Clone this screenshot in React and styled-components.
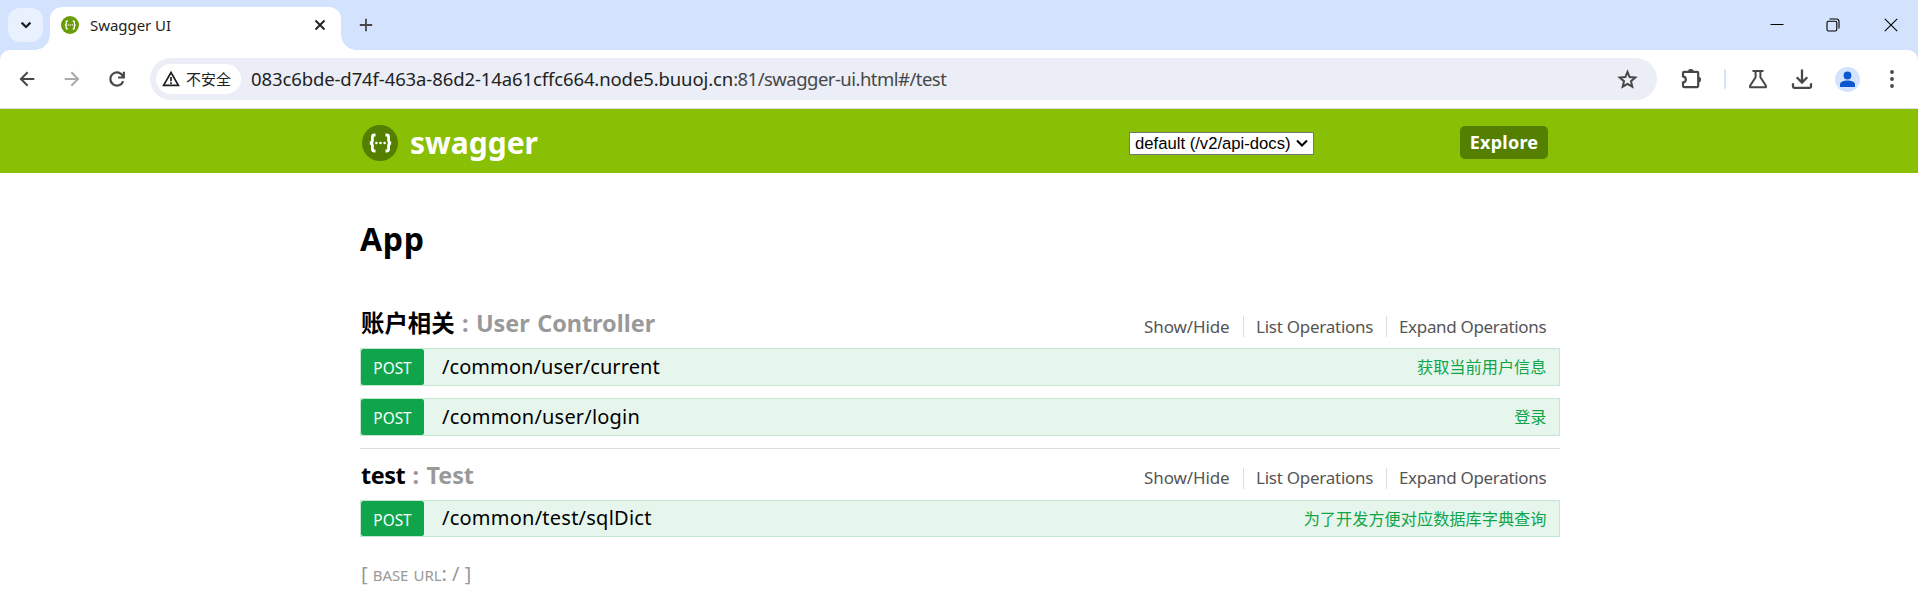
import React from 'react';
import styled, { createGlobalStyle } from 'styled-components';

const GlobalStyle = createGlobalStyle`
  * { box-sizing: border-box; }
  html, body { margin: 0; padding: 0; background: #fff; overflow: hidden; }
  body { font-family: 'Noto Sans', 'Noto Sans CJK SC', sans-serif; }
`;

const Page = styled.div`
  width: 100%;
  height: 607px;
  background: #fff;
  overflow: hidden;
`;

/* ---------- browser window ---------- */

const Chrome = styled.header`
  height: 109px;
  background: #d3e3fd;
`;

const TabStrip = styled.div`
  height: 50px;
  display: flex;
  align-items: flex-start;
  padding-left: 8px;
`;

const TabSearch = styled.div`
  width: 35px;
  height: 34px;
  margin-top: 8px;
  border-radius: 12px;
  background: #e9f1fe;
  display: flex;
  align-items: center;
  justify-content: center;
`;

const Tab = styled.div`
  position: relative;
  width: 291px;
  height: 43px;
  margin: 7px 0 0 7px;
  padding: 0 15px 7px 11px;
  border-radius: 12px 12px 0 0;
  background: #fff;
  display: flex;
  align-items: center;

  &::before,
  &::after {
    content: '';
    position: absolute;
    bottom: 0;
    width: 15px;
    height: 15px;
  }
  &::before {
    left: -15px;
    background: radial-gradient(circle at 0 0, transparent 14.5px, #fff 15px);
  }
  &::after {
    right: -15px;
    background: radial-gradient(circle at 100% 0, transparent 14.5px, #fff 15px);
  }
`;

const TabTitle = styled.span`
  flex: 1;
  margin-left: 11px;
  font-size: 15px;
  line-height: 36px;
  letter-spacing: -0.05px;
  color: #1f1f1f;
`;

const NewTab = styled.div`
  width: 14px;
  height: 34px;
  margin: 8px auto 0 18px;
  display: flex;
  align-items: center;
`;

const WindowControls = styled.div`
  height: 50px;
  padding-right: 20px;
  display: flex;
  align-items: center;
  gap: 42px;

  svg:last-child { margin-left: 2px; }
`;

const Toolbar = styled.div`
  height: 59px;
  background: #fff;
  border-radius: 10px 10px 0 0;
  border-bottom: 1px solid #dcdfe0;
  display: flex;
  align-items: center;
  padding: 0 16px 0 16px;
`;

const NavButtons = styled.div`
  width: 134px;
  display: flex;
  align-items: center;
  gap: 23px;
`;

const AddressBar = styled.div`
  flex: 1;
  height: 42px;
  border-radius: 21px;
  background: #ebeef7;
  display: flex;
  align-items: center;
  padding: 0 19px 0 6px;
`;

const SecurityChip = styled.div`
  width: 85px;
  height: 30px;
  border-radius: 15px;
  background: #fff;
  display: flex;
  align-items: center;
  padding-left: 6px;
  gap: 6px;
  font-size: 15px;
  line-height: 30px;
  color: #1f1f1f;
`;

const Url = styled.div`
  flex: 1;
  margin-left: 10px;
  font-size: 18.5px;
  line-height: 42px;
  color: #1f1f1f;
  white-space: nowrap;
`;

const Host = styled.span`
  letter-spacing: -0.11px;
`;

const UrlPath = styled.span`
  letter-spacing: -0.53px;
  color: #474747;
`;

const ToolbarActions = styled.div`
  width: 245px;
  height: 42px;
  padding-left: 23px;
  display: flex;
  align-items: center;
  justify-content: space-between;
`;

const Divider = styled.span`
  width: 2px;
  height: 20px;
  border-radius: 1px;
  background: #d3e3fd;
`;

const Avatar = styled.div`
  width: 25px;
  height: 25px;
  border-radius: 50%;
  background: #d3e3fd;
  display: flex;
  align-items: center;
  justify-content: center;
`;

/* ---------- swagger page ---------- */

const Banner = styled.div`
  height: 64px;
  background: #89bf04;
`;

const BannerInner = styled.div`
  width: 1200px;
  height: 64px;
  margin: 0 auto 0 360px;
  padding: 0 12px 0 2px;
  display: flex;
  align-items: center;
`;

const Brand = styled.div`
  flex: 1;
  display: flex;
  align-items: center;
  gap: 12px;
  font-size: 30px;
  font-weight: 700;
  line-height: 64px;
  color: #fff;

  svg { margin-top: 3px; }
  span { padding-top: 3px; line-height: 61px; }
`;

const SpecSelect = styled.div`
  width: 185px;
  height: 23px;
  margin-top: 4px;
  border: 1px solid #767676;
  background: #fff;
  display: flex;
  align-items: center;
  justify-content: space-between;
  padding: 0 5px;
  font: 16.667px/21px 'Liberation Sans', Arial, sans-serif;
  color: #000;
  white-space: nowrap;
`;

const ExploreButton = styled.div`
  width: 88px;
  height: 33px;
  margin: 3px 0 0 146px;
  border-radius: 5px;
  background: #547f00;
  color: #fff;
  font-size: 18px;
  font-weight: 700;
  letter-spacing: 0.25px;
  line-height: 32px;
  text-align: center;
`;

const Content = styled.main`
  width: 1200px;
  margin-left: 360px;
  padding-top: 44px;
`;

const ApiTitle = styled.h1`
  margin: 0 0 40px;
  height: 44px;
  font-size: 32px;
  font-weight: 700;
  letter-spacing: 0.7px;
  line-height: 44px;
  color: #000;
`;

const Resource = styled.section`
  padding-bottom: 12px;
  ${(p) => p.$divided && 'border-bottom: 1px solid #ddd; margin-bottom: 4px;'}
`;

const ResourceHead = styled.div`
  height: 47px;
  display: flex;
  justify-content: space-between;
  align-items: flex-start;
`;

const ResourceName = styled.h2`
  margin: 0;
  padding-left: 1px;
  font-size: 23.4px;
  font-weight: 700;
  line-height: 44px;
  color: #000;
  white-space: pre;
  letter-spacing: ${(p) => p.$spacing || 0}px;
`;

const Muted = styled.span`
  color: #999;
  word-spacing: 1.3px;
  letter-spacing: ${(p) => p.$spacing || 0}px;
`;

const Links = styled.ul`
  list-style: none;
  display: flex;
  margin: 15px 0 0;
  padding: 0 14px 0 0;
`;

const LinkItem = styled.li`
  height: 21px;
  padding-left: 12px;
  width: ${(p) => p.$width}px;
  border-left: 1px solid ${(p) => (p.$first ? 'transparent' : '#ddd')};
  font-size: 17px;
  line-height: ${(p) => (p.$raised ? 19 : 21)}px;
  letter-spacing: ${(p) => p.$spacing}px;
  color: #555;
  white-space: nowrap;
`;

const Operation = styled.div`
  height: ${(p) => p.$height || 38}px;
  display: flex;
  border: 1px solid #c3e8d1;
  background: #e7f6ec;
  & + & { margin-top: 12px; }
`;

const Method = styled.span`
  width: 63px;
  border-radius: 2.5px;
  background: #10a54a;
  color: #fff;
  font-size: 15.4px;
  line-height: 40px;
  text-align: center;
`;

const Path = styled.span`
  flex: 1;
  padding-left: 18px;
  font-size: 20px;
  line-height: ${(p) => (p.$raised ? 34 : 36)}px;
  letter-spacing: ${(p) => p.$spacing}px;
  color: #000;
`;

const Summary = styled.span`
  padding-right: 12.5px;
  font-size: 16.2px;
  line-height: 37px;
  color: #10a54a;
`;

const Footer = styled.footer`
  padding: 9px 0 0 1px;
  font-size: 20px;
  line-height: 32px;
  color: #999;
  white-space: pre;
`;

const BaseLabel = styled.span`
  font-size: 15px;
  letter-spacing: -0.1px;
  word-spacing: 1.5px;
  text-transform: uppercase;
`;

const Stroke = ({ size = 22, w = 2, color = '#474747', children, vb = '0 0 24 24', ...rest }) => (
  <svg width={size} height={size} viewBox={vb} fill="none" stroke={color} strokeWidth={w} {...rest}>
    {children}
  </svg>
);

const Braces = ({ size, bg, fg = '#fff', w = 2 }) => (
  <svg width={size} height={size} viewBox="0 0 36 36">
    <circle cx="18" cy="18" r="18" fill={bg} />
    <g fill="none" stroke={fg} strokeWidth={w}>
      <path d="M13.5 10H12.4q-2 0-2 2v3.4q0 2.3-2.4 2.6q2.4.3 2.4 2.6V24q0 2 2 2h1.1" />
      <path d="M23.500 10h1.100q2 0 2 2v3.400q0 2.300 2.400 2.600q-2.400.3-2.400 2.600V24q0 2-2 2h-1.100" />
    </g>
    <g fill={fg}>
      <circle cx="14.400" cy="18" r="1.300" />
      <circle cx="18.500" cy="18" r="1.300" />
      <circle cx="22.600" cy="18" r="1.300" />
    </g>
  </svg>
);

const resources = [
  {
    name: '账户相关', label: 'User Controller', divided: true,
    operations: [
      { path: '/common/user/current', spacing: 0.07, summary: '获取当前用户信息' },
      { path: '/common/user/login', spacing: 0.2, summary: '登录' },
    ],
  },
  {
    name: 'test', label: 'Test', nameSpacing: -0.45, labelSpacing: -0.05, compact: true,
    operations: [
      { path: '/common/test/sqlDict', spacing: 0.24, summary: '为了开发方便对应数据库字典查询', height: 37 },
    ],
  },
];

const BrowserChrome = () => (
  <Chrome>
    <TabStrip>
      <TabSearch>
        <Stroke size={12} vb="0 0 12 12" w={2.2} color="#1f1f1f"><path d="M1.600 3.600 6 8l4.400-4.400" /></Stroke>
      </TabSearch>
      <Tab>
        <Braces size={18} bg="#6a9c08" w={2.6} />
        <TabTitle>Swagger UI</TabTitle>
        <Stroke size={12} vb="0 0 12 12" w={1.8} color="#1f1f1f"><path d="m1.500 1.500 9 9m0-9-9 9" /></Stroke>
      </Tab>
      <NewTab>
        <Stroke size={14} vb="0 0 14 14" w={1.8}><path d="M7 .8v12.400M.8 7h12.400" /></Stroke>
      </NewTab>
      <WindowControls>
        <Stroke size={14} vb="0 0 14 14" w={1} color="#000"><path d="M.5 6.500h13" /></Stroke>
        <Stroke size={14} vb="0 0 14 14" w={1.1} color="#000">
          <rect x="1" y="3.200" width="9.800" height="9.800" rx="1.500" />
          <path d="M3.500 1h6.800Q13 1 13 3.700v6.800" />
        </Stroke>
        <Stroke size={14} vb="0 0 14 14" w={1.1} color="#000"><path d="m.8.8 12.400 12.400m0-12.400L.8 13.200" /></Stroke>
      </WindowControls>
    </TabStrip>
    <Toolbar>
      <NavButtons>
        <Stroke w={2.2}><path d="M20 12H5.500M12.700 4.700 5.400 12l7.300 7.300" /></Stroke>
        <Stroke w={2.2} color="#ababab"><path d="M4 12h14.500M11.300 4.700 18.600 12l-7.300 7.300" /></Stroke>
        <Stroke w={2.3}>
          <path d="M18.800 14.300A7.200 7.200 0 1 1 18.700 9.400M19.500 4v6.300h-6.300" />
        </Stroke>
      </NavButtons>
      <AddressBar>
        <SecurityChip>
          <Stroke size={18} vb="0 0 18 18" w={1.7} color="#1f1f1f">
            <path d="M9 2.500 16.400 15.400H1.600z" /><path d="M9 7v4.300M9 12.300v1.700" />
          </Stroke>
          不安全
        </SecurityChip>
        <Url>
          <Host>083c6bde-d74f-463a-86d2-14a61cffc664.node5.buuoj.cn</Host>
          <UrlPath>:81/swagger-ui.html#/test</UrlPath>
        </Url>
        <Stroke size={21} vb="0 0 21 21" w={2}>
          <path d="m10.500 2.800 2.100 5.200 5.700.5-4.300 3.700 1.300 5.500-4.800-2.900-4.800 2.900L7 12.200 2.700 8.500l5.700-.5z" />
        </Stroke>
      </AddressBar>
      <ToolbarActions>
        <Stroke size={22} vb="0 0 22 22" w={2.2}>
          <path d="M4 3.900h13.200q1 0 1 1v13.200q0 1-1 1H4q-1 0-1-1v-3.600c3.800-.6 3.800-5.600 0-6.200V4.900q0-1 1-1z" />
          <path d="M7.800 3.900a3 3 0 0 1 6 0zM18.200 8.700a2.900 2.900 0 0 1 0 5.800z" fill="#474747" stroke="none" />
        </Stroke>
        <Divider />
        <Stroke size={20} vb="0 0 20 20" w={2}>
          <path d="M4.500 1.900h11M7.600 2v6.200L2.100 16.800q-.7 1.500.9 1.500h14q1.600 0 .9-1.500L12.400 8.200V2" />
        </Stroke>
        <Stroke size={22} vb="0 0 22 22" w={2.300}>
          <path d="M11 1.500v12.700M5.700 9.200l5.300 5.300 5.300-5.300M2 15.300v3.300q0 1.300 1.300 1.300h15.400q1.300 0 1.300-1.300v-3.300" />
        </Stroke>
        <Avatar>
          <svg width="17" height="17" viewBox="0 0 17 17" fill="#0b57d0">
            <circle cx="8.500" cy="4.500" r="3.900" />
            <path d="M1 16v-2.500C1 10.800 5 9.600 8.500 9.600S16 10.800 16 13.500V16z" />
          </svg>
        </Avatar>
        <svg width="20" height="20" viewBox="0 0 20 20" fill="#474747">
          <circle cx="10" cy="3" r="1.900" /><circle cx="10" cy="10" r="1.900" /><circle cx="10" cy="17" r="1.900" />
        </svg>
      </ToolbarActions>
    </Toolbar>
  </Chrome>
);

export default function App() {
  return (
    <Page>
      <GlobalStyle />
      <BrowserChrome />
      <Banner>
        <BannerInner>
          <Brand>
            <Braces size={36} bg="#547f00" w={2.8} />
            <span>swagger</span>
          </Brand>
          <SpecSelect>
            default (/v2/api-docs)
            <Stroke size={12} vb="0 0 12 12" w={2.1} color="#000"><path d="m1 3.500 5 5 5-5" /></Stroke>
          </SpecSelect>
          <ExploreButton>Explore</ExploreButton>
        </BannerInner>
      </Banner>
      <Content>
        <ApiTitle>App</ApiTitle>
        {resources.map((r) => (
          <Resource key={r.name} $divided={r.divided}>
            <ResourceHead>
              <ResourceName $spacing={r.nameSpacing}>
                {r.name}
                <Muted $spacing={r.labelSpacing}>{' : '}{r.label}</Muted>
              </ResourceName>
              <Links>
                <LinkItem $first $width={112} $spacing={-0.1} $raised={r.compact}>Show/Hide</LinkItem>
                <LinkItem $width={143} $spacing={-0.25} $raised={r.compact}>List Operations</LinkItem>
                <LinkItem $width={160} $spacing={-0.33} $raised={r.compact}>Expand Operations</LinkItem>
              </Links>
            </ResourceHead>
            {r.operations.map((o) => (
              <Operation key={o.path} $height={o.height}>
                <Method>POST</Method>
                <Path $spacing={o.spacing} $raised={r.compact}>{o.path}</Path>
                <Summary>{o.summary}</Summary>
              </Operation>
            ))}
          </Resource>
        ))}
        <Footer>[ <BaseLabel>base url</BaseLabel>: / ]</Footer>
      </Content>
    </Page>
  );
}
